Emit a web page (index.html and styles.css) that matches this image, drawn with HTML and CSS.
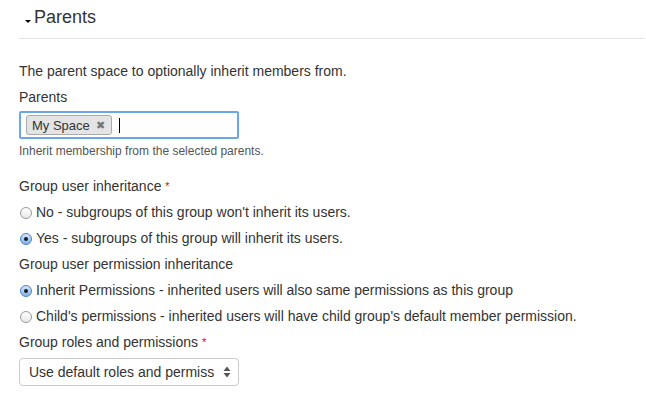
FILE: index.html
```html
<!DOCTYPE html>
<html>
<head>
<meta charset="utf-8">
<link rel="stylesheet" href="styles.css">
</head>
<body>
<div class="page">
  <div class="section-head">
    <span class="caret"></span><span class="title">Parents</span>
  </div>
  <p class="desc">The parent space to optionally inherit members from.</p>
  <div class="field">
    <div class="label">Parents</div>
    <div class="tagbox">
      <span class="tag">My Space <span class="tag-x">✖</span></span>
      <span class="cursor"></span>
    </div>
    <div class="help">Inherit membership from the selected parents.</div>
  </div>
  <div class="field-group">
    <div class="label">Group user inheritance <span class="req">*</span></div>
    <label class="radio"><span class="rb"></span>No - subgroups of this group won't inherit its users.</label>
    <label class="radio"><span class="rb on"></span>Yes - subgroups of this group will inherit its users.</label>
    <div class="label">Group user permission inheritance</div>
    <label class="radio"><span class="rb on"></span>Inherit Permissions - inherited users will also same permissions as this group</label>
    <label class="radio"><span class="rb"></span>Child's permissions - inherited users will have child group's default member permission.</label>
    <div class="label">Group roles and permissions <span class="req">*</span></div>
    <div class="select">
      <span class="select-text">Use default roles and permiss</span>
      <svg class="arrows" width="8" height="12" viewBox="0 0 8 12"><path d="M4 0.5 L7.5 5 H0.5 Z M4 11.5 L7.5 7 H0.5 Z" fill="#555"/></svg>
    </div>
  </div>
</div>
</body>
</html>
```
FILE: styles.css
```css
html, body { margin: 0; padding: 0; background: #fff; }
body { font-family: "Liberation Sans", Arial, sans-serif; color: #333; font-size: 14px; }
.page { padding: 0 1px 0 19px; }
.section-head {
  border-bottom: 1px solid #e5e5e5;
  display: flex;
  align-items: flex-start;
  padding-top: 6px;
  box-sizing: border-box;
  height: 39px;
}
.caret {
  width: 0; height: 0;
  border-left: 3px solid transparent;
  border-right: 3px solid transparent;
  border-top: 3px solid #000;
  margin: 14px 3px 0 6px;
}
.title { font-size: 18px; line-height: 22px; color: #333; }
.desc { margin: 22px 0 0 0; line-height: 20px; }
.field { margin-top: 6px; }
.label { line-height: 20px; }
.tagbox {
  margin-top: 4px;
  width: 220px; height: 28px; box-sizing: border-box;
  border: 2px solid #6aa6ec;
  border-radius: 2px;
  display: flex; align-items: center;
  padding-left: 5px;
}
.tag {
  display: inline-flex; align-items: center;
  height: 20px; box-sizing: border-box;
  padding: 0 6px 0 5px;
  border: 1px solid #aaa;
  border-radius: 3px;
  background: #e4e4e4;
  font-size: 13px; color: #333;
}
.tag-x { font-size: 11px; color: #777; margin-left: 6px; }
.cursor { width: 1px; height: 15px; background: #000; margin-left: 7px; }
.help { font-size: 12px; color: #555; margin-top: 5px; line-height: 15px; }
.field-group { margin-top: 17px; }
.req { color: #e00; font-size: 11px; vertical-align: top; }
.radio { display: flex; align-items: center; line-height: 20px; margin-top: 6px; }
.field-group .label { margin-top: 6px; }
.field-group .label:first-child { margin-top: 0; }
.rb {
  width: 12px; height: 12px; border-radius: 50%;
  border: 1px solid #9a9a9a;
  background: linear-gradient(#fff, #e8e8e8);
  margin: 1px 4px 0 1px;
  box-sizing: border-box;
  position: relative;
  flex: none;
}
.rb.on { border-color: #4a82c7; background: linear-gradient(#d6e8fc, #7fb2ee); }
.rb.on::after {
  content: ""; position: absolute; left: 3px; top: 3px;
  width: 4px; height: 4px; border-radius: 50%; background: #1a1a1a;
}
.select {
  margin-top: 6px;
  width: 220px; height: 28px; box-sizing: border-box;
  border: 1px solid #ccc; border-radius: 4px;
  display: flex; align-items: center; justify-content: space-between;
  padding: 0 7px 0 9px;
}
.select-text { font-size: 14px; color: #333; }
```
